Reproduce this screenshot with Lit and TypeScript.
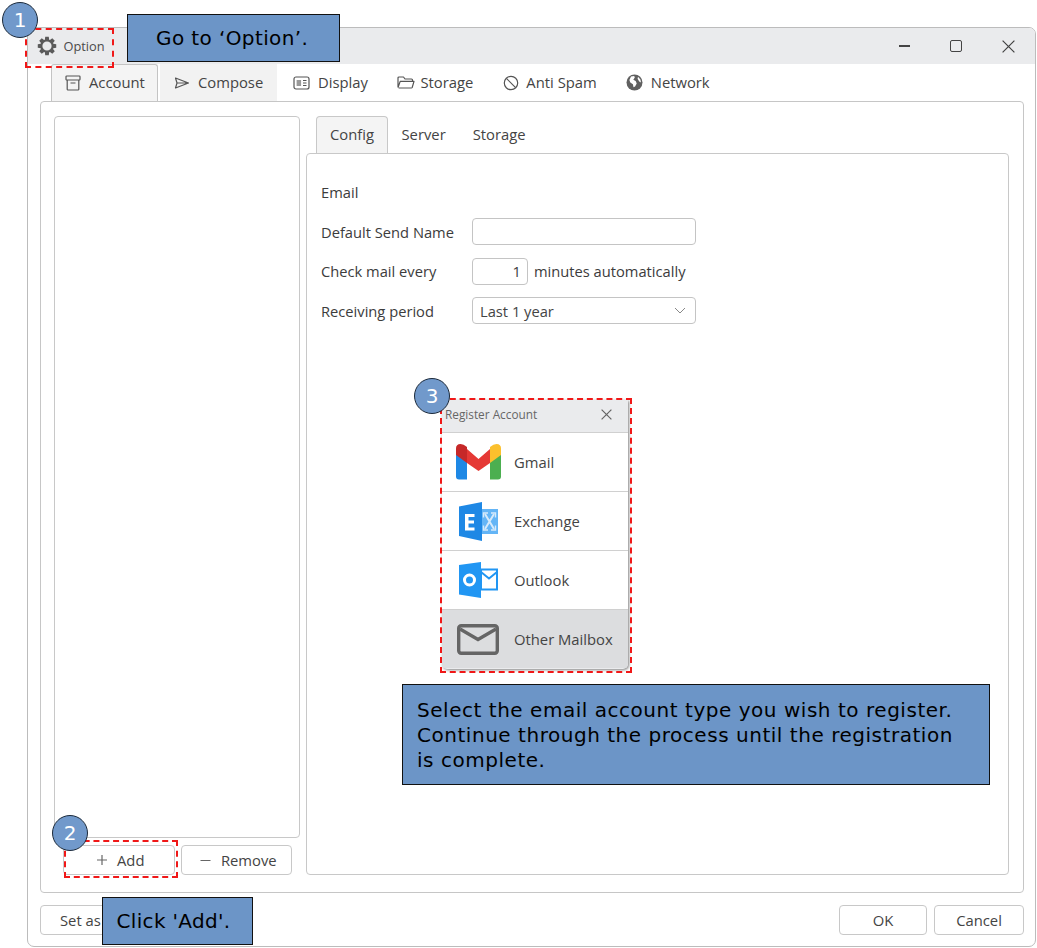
import { LitElement, html, css, svg } from "lit";
import { customElement } from "lit/decorators.js";

const ic = (w: number, h: number, body: unknown) =>
  html`<svg width=${w} height=${h} viewBox=${`0 0 ${w} ${h}`} fill="none" stroke="currentColor" stroke-width="1.2">${body}</svg>`;

const gearPath = (() => {
  const teeth = 8;
  const pts: string[] = [];
  for (let i = 0; i < teeth; i++) {
    const a = (i * 2 * Math.PI) / teeth - Math.PI / 2;
    const off = [[-0.33, 6.7], [-0.19, 9.4], [0.19, 9.4], [0.33, 6.7]];
    for (const [d, r] of off) {
      pts.push(`${(10 + r * Math.cos(a + d)).toFixed(2)} ${(10 + r * Math.sin(a + d)).toFixed(2)}`);
    }
  }
  return `M${pts.join("L")}Z M10 5.400a4.600 4.600 0 1 0 0 9.200a4.600 4.600 0 1 0 0-9.200Z`;
})();

const gear = html`<svg width="20" height="20" viewBox="0 0 20 20"><path fill="#5b5b5b" fill-rule="evenodd" d=${gearPath}/></svg>`;
const archive = ic(16, 16, svg`<rect x="1" y="1" width="14" height="4" rx=".8"/><path d="M2.200 5v9.200a.8.8 0 0 0 .8.8h10a.8.8 0 0 0 .8-.8V5M5.500 8h5"/>`);
const send = ic(16, 12, svg`<path d="M1.500 1l13 5-13 5 1.500-5zM3 6h11.500" stroke-linejoin="round"/>`);
const news = ic(17, 14, svg`<rect x="1" y="1" width="15" height="12" rx="2"/><rect x="3.600" y="4" width="4.500" height="6" fill="#999" stroke="none"/><path d="M10 4.500h3.500M10 7h3.500M10 9.500h3.500" stroke-width="1"/>`);
const folder = ic(18, 13, svg`<path d="M1 11.500V2a1 1 0 0 1 1-1h4.500l1.500 2h6.500a1 1 0 0 1 1 1v1.400M1 11.500 3.200 5.400h13.800l-1.800 6.100a1 1 0 0 1-1 .5H1.600" stroke-linejoin="round"/>`);
const ban = ic(16, 16, svg`<circle cx="8" cy="8" r="6.700"/><path d="M3.400 3.400l9.200 9.200"/>`);
const globe = html`<svg width="17" height="17" viewBox="0 0 17 17"><circle cx="8.500" cy="8.500" r="8" fill="#606060"/><path fill="#fff" d="M5 2.400 8.200 2l.6 1.600-1.500 2.200 2.400 1.200 1 2.600-1.600 3-1.600.6-.6-3-2.600-1.600-.9-2.600zM12 2.800l2.400 2.600.6 3-1.800-1-1.600-2.600z"/></svg>`;
const plus = ic(10, 10, svg`<path d="M5 0v10M0 5h10"/>`);
const minus = ic(11, 11, svg`<path d="M.5 5.500h10"/>`);
const chevron = ic(12, 7, svg`<path d="M1 1l5 5 5-5" stroke-width="1"/>`);
const closeX = (s: number) => ic(s, s, svg`<path d="M.6.6l${s - 1.2} ${s - 1.2}M${s - 0.6} .6l-${s - 1.2} ${s - 1.2}"/>`);

const gmail = html`<svg width="45" height="36" viewBox="0 0 45 36">
  <path fill="#1e88e5" d="M0 10 11 18V35.500H3Q0 35.500 0 32.500z"/>
  <path fill="#4caf50" d="M45 10 34 18V35.500H42Q45 35.500 45 32.500z"/>
  <path fill="#e53935" d="M11 5 22.500 15 34 5V19L22.500 27 11 19z"/>
  <path fill="#c62828" d="M0 4.500Q0 0 4.500 0 7.500 0 11 3V19L0 11z"/>
  <path fill="#fbc02d" d="M45 4.500Q45 0 40.500 0 37.500 0 34 3V19L45 11z"/>
</svg>`;
const exchange = html`<svg width="39" height="39" viewBox="0 0 39 39">
  <rect x="22" y="7" width="17" height="25" fill="#64b5f6"/>
  <g fill="none" stroke="#d6eafb" stroke-width="2">
    <path d="M26 12 35 27M35 12 26 27"/>
    <path d="M24.500 15.500V11H29M36.500 15.500V11H32M24.500 23.500V28H29M36.500 23.500V28H32" stroke-width="1.400"/>
  </g>
  <path fill="#1e88e5" d="M0 4.500 23 0v39L0 34z"/>
  <path fill="#fff" d="M6 12h9.500v3h-6v3.600h5.500v2.900H9.500v4H15.500V28.500H6z"/>
</svg>`;
const outlook = html`<svg width="39" height="36" viewBox="0 0 39 36">
  <path fill="#2196f3" d="M0 3 22 0v36L0 32.500z"/>
  <circle cx="10.500" cy="18" r="5" fill="none" stroke="#fff" stroke-width="3"/>
  <rect x="22" y="7.500" width="16" height="20" fill="#fff" stroke="#2196f3" stroke-width="2"/>
  <path d="M22 10l8 6.500 8-6.500" fill="none" stroke="#2196f3" stroke-width="2"/>
</svg>`;
const mail = html`<svg width="42" height="31" viewBox="0 0 42 31" fill="none" stroke="#656565" stroke-width="3.400">
  <rect x="1.700" y="1.700" width="38.600" height="27.600" rx="2.500"/><path d="M3 5l18 10.500L39 5"/>
</svg>`;

@customElement("app-root")
export class AppRoot extends LitElement {
  static styles = css`
    :host { display: block; position: relative; width: 1037px; height: 948px; background: #fff; overflow: hidden;
      font-family: "Open Sans", "Noto Sans", sans-serif; font-size: 14.700px; color: #3c3c3c; }
    .window { box-sizing: border-box; margin: 27px 0 0 27px; width: 1009px; height: 920px; border: 1.500px solid #bcbcbc;
      border-radius: 7px; display: flex; flex-direction: column; overflow: hidden; background: #fff; }
    .title { flex: none; height: 36px; background: #eaebed; display: flex; align-items: center; justify-content: space-between; }
    .option { display: flex; align-items: center; gap: 7px; padding-left: 8.500px; font-size: 12.800px; color: #4a4a4a; }
    .controls { display: flex; align-items: center; gap: 40px; padding-right: 20px; color: #444; }
    .min { width: 11px; height: 1.500px; background: #444; }
    .max { box-sizing: border-box; width: 12px; height: 12px; border: 1.300px solid #444; border-radius: 2px; }
    .tabs { flex: none; height: 37px; display: flex; padding-left: 23px; gap: 2px; }
    .tab { box-sizing: border-box; display: flex; align-items: center; gap: 8px; color: #444; font-size: 14.800px; white-space: nowrap; }
    .tab span { padding-bottom: 2px; }
    .tab svg { color: #555; }
    .tab.on { width: 107px; background: #f4f4f4; border: 1px solid #c4c4c4; border-bottom: none; border-radius: 3px 3px 0 0; padding-left: 13px; }
    .tab.soft { width: 117px; background: #f2f2f2; padding-left: 14px; }
    .tab.plain { padding: 0 13.500px 0 14px; }
    .tab.g5 { gap: 5px; }
    .tab.g7 { gap: 7.500px; }
    .panel { flex: none; box-sizing: border-box; margin-left: 12px; width: 984px; height: 792px; border: 1.500px solid #c6c6c6; border-radius: 4px;
      display: flex; padding: 14px 14px 17px 13px; gap: 6px; }
    .left { flex: none; width: 246px; display: flex; flex-direction: column; }
    .list { flex: 1; border: 1.500px solid #c8c8c8; border-radius: 4px; box-sizing: border-box; }
    .listbtns { flex: none; display: flex; gap: 6px; margin: 7px 8px 0 9px; }
    .btn { box-sizing: border-box; height: 30px; border: 1.500px solid #c8c8c8; border-radius: 4px; display: flex; align-items: center; justify-content: center;
      gap: 10px; background: #fff; color: #444; font-size: 14.800px; }
    .listbtns .btn { flex: 1; padding-left: 4px; }
    .listbtns svg { color: #666; }
    .right { flex: 1; display: flex; flex-direction: column; min-width: 0; }
    .subtabs { flex: none; height: 37px; display: flex; padding-left: 10px; }
    .sub { box-sizing: border-box; display: flex; align-items: center; padding: 0 13.500px 2px; font-size: 14.800px; color: #444; }
    .sub.on { width: 72px; justify-content: center; padding: 0 0 2px; background: #f4f4f4; border: 1.500px solid #c8c8c8; border-bottom: none; border-radius: 4px 4px 0 0; }
    .content { flex: 1; box-sizing: border-box; border: 1.500px solid #c8c8c8; border-radius: 4px; padding: 29px 14px 0; }
    .h { height: 18px; line-height: 18px; }
    .form { display: grid; grid-template-columns: 151px 1fr; row-gap: 12.500px; align-items: center; margin-top: 17px; justify-items: start; }
    .field { box-sizing: border-box; width: 224px; height: 27px; border: 1.500px solid #c4c4c4; border-radius: 4px; display: flex; align-items: center; justify-content: space-between; padding: 0 9px 0 7px; color: #444; }
    .row { display: flex; align-items: center; gap: 6px; }
    .num { box-sizing: border-box; width: 56px; height: 27px; border: 1.500px solid #c4c4c4; border-radius: 4px; display: flex; align-items: center; justify-content: flex-end; padding-right: 6px; }
    .field svg { color: #888; }
    .bottom { flex: none; height: 53px; display: flex; align-items: center; justify-content: space-between; padding: 0 11px 0 12px; }
    .setas { width: 120px; justify-content: flex-start; padding-left: 19px; }
    .actions { display: flex; gap: 7px; }
    .ok { width: 88px; }
    .cancel { width: 90px; }

    .callout { position: absolute; box-sizing: border-box; background: #6c95c7; border: 1px solid #111; color: #000;
      font-family: "DejaVu Sans", sans-serif; font-size: 20px; display: flex; align-items: center; white-space: nowrap; }
    .c1 { left: 127px; top: 14px; width: 213px; height: 48px; padding-left: 28px; letter-spacing: .4px; }
    .c2 { left: 102px; top: 897px; width: 151px; height: 48px; padding-left: 13.500px; letter-spacing: .33px; }
    .c3 { left: 402px; top: 684px; width: 588px; height: 101px; padding-left: 14px; line-height: 25px; display: block; padding-top: 13px; letter-spacing: .53px; }
    .badge { position: absolute; box-sizing: border-box; width: 36px; height: 36px; border-radius: 50%; background: #7199cb; border: 1px solid #1c2a3a;
      color: #fff; font-family: "DejaVu Sans", sans-serif; font-size: 20px; display: flex; align-items: center; justify-content: center; }
    .b1 { left: 2px; top: 2px; }
    .b2 { left: 52px; top: 815px; }
    .b3 { left: 414px; top: 378px; }
    .dash { position: absolute; box-sizing: border-box; border: 2px dashed #f01818; }
    .d1 { left: 25px; top: 28px; width: 89px; height: 40px; }
    .d2 { left: 64px; top: 840px; width: 114px; height: 38px; }
    .d3 { left: 440px; top: 398px; width: 192px; height: 275px; }

    .dialog { position: absolute; left: 442px; top: 400px; width: 186px; height: 269px; background: #eaebed; border-radius: 0 0 5px 5px;
      box-shadow: 1px 1px 3px rgba(0,0,0,.5); display: flex; flex-direction: column; overflow: hidden; }
    .dtitle { flex: none; box-sizing: border-box; height: 32px; display: flex; align-items: center; justify-content: space-between; padding: 0 16px 4px 3px; font-size: 11.800px; color: #666; }
    .dtitle svg { color: #666; }
    .opt { flex: none; box-sizing: border-box; height: 59px; background: #fff; display: flex; align-items: center; border-top: 1px solid #d0d0d0; font-size: 14.800px; color: #444; }
    .opt.sel { background: #dcdddf; }
    .ico { flex: none; width: 72px; display: flex; justify-content: center; }
  `;

  render() {
    return html`
      <div class="window">
        <div class="title">
          <div class="option">${gear}<span>Option</span></div>
          <div class="controls"><div class="min"></div><div class="max"></div>${closeX(13)}</div>
        </div>
        <div class="tabs">
          <div class="tab on">${archive}<span>Account</span></div>
          <div class="tab soft">${send}<span>Compose</span></div>
          <div class="tab plain">${news}<span>Display</span></div>
          <div class="tab plain g5">${folder}<span>Storage</span></div>
          <div class="tab plain g7">${ban}<span>Anti Spam</span></div>
          <div class="tab plain g7">${globe}<span>Network</span></div>
        </div>
        <div class="panel">
          <div class="left">
            <div class="list"></div>
            <div class="listbtns">
              <div class="btn">${plus}<span>Add</span></div>
              <div class="btn">${minus}<span>Remove</span></div>
            </div>
          </div>
          <div class="right">
            <div class="subtabs">
              <div class="sub on">Config</div>
              <div class="sub">Server</div>
              <div class="sub">Storage</div>
            </div>
            <div class="content">
              <div class="h">Email</div>
              <div class="form">
                <span>Default Send Name</span><div class="field"></div>
                <span>Check mail every</span>
                <div class="row"><div class="num">1</div><span>minutes automatically</span></div>
                <span>Receiving period</span>
                <div class="field"><span>Last 1 year</span>${chevron}</div>
              </div>
            </div>
          </div>
        </div>
        <div class="bottom">
          <div class="btn setas">Set as</div>
          <div class="actions"><div class="btn ok">OK</div><div class="btn cancel">Cancel</div></div>
        </div>
      </div>

      <div class="dialog">
        <div class="dtitle"><span>Register Account</span>${closeX(11)}</div>
        <div class="opt"><div class="ico">${gmail}</div>Gmail</div>
        <div class="opt"><div class="ico">${exchange}</div>Exchange</div>
        <div class="opt"><div class="ico">${outlook}</div>Outlook</div>
        <div class="opt sel"><div class="ico">${mail}</div>Other Mailbox</div>
      </div>

      <div class="dash d1"></div>
      <div class="dash d2"></div>
      <div class="dash d3"></div>
      <div class="callout c1">Go to ‘Option’.</div>
      <div class="callout c2">Click 'Add'.</div>
      <div class="callout c3">Select the email account type you wish to register.<br />Continue through the process until the registration<br />is complete.</div>
      <div class="badge b1">1</div>
      <div class="badge b2">2</div>
      <div class="badge b3">3</div>
    `;
  }
}
